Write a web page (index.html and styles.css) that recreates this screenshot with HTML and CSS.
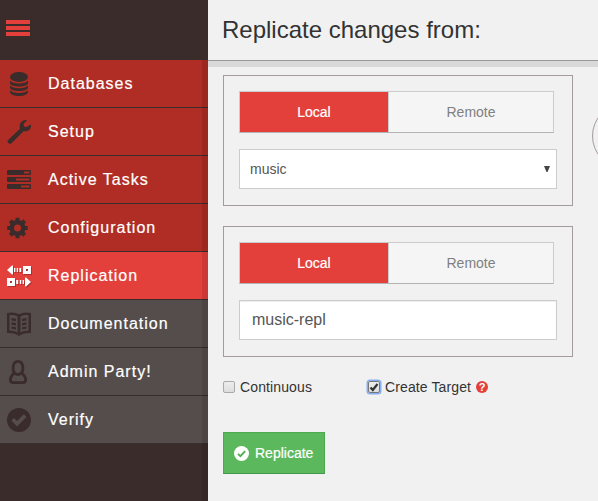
FILE: index.html
```html
<!DOCTYPE html>
<html lang="en">
<head>
<meta charset="utf-8">
<title>Replication</title>
<link rel="stylesheet" href="styles.css">
</head>
<body>
<div class="app">
  <aside class="sidebar">
    <div class="burger"><span></span><span></span><span></span></div>
    <nav class="nav">
      <a class="item">
        <svg class="icon" viewBox="0 0 24 24"><ellipse cx="12" cy="5" rx="9" ry="5"/><path d="M3 8.500c2 4 16 4 18 0v2.700c-1 4.400-17 4.400-18 0zM3 13.300c2 4 16 4 18 0v2.500c-1 4.400-17 4.400-18 0zM3 18c2 4 16 4 18 0v2c-1 5.300-17 5.300-18 0z"/></svg>
        <span>Databases</span></a>
      <a class="item">
        <svg class="icon" viewBox="0 0 24 24"><path d="M18.500 0h.8l.7.600-3.500 3.200.5 2.800 2.800.5L23.500 4.500l.5.700c.2 4-3 6.700-7.500 6L4.500 23.200c-2 1.600-5-.8-3.600-3L13 8.800C11.800 4.500 14 .5 18.500 0z"/></svg>
        <span>Setup</span></a>
      <a class="item">
        <svg class="icon" viewBox="0 0 24 24"><path fill-rule="evenodd" d="M1 2h22q1 0 1 1v3q0 1-1 1H1q-1 0-1-1V3q0-1 1-1zm16 1.500v2h5.500v-2zM1 9h22q1 0 1 1v3q0 1-1 1H1q-1 0-1-1v-3q0-1 1-1zm8 1.500v2h13.500v-2zM1 16h22q1 0 1 1v3q0 1-1 1H1q-1 0-1-1v-3q0-1 1-1zm13 1.500v2h8.500v-2z"/></svg>
        <span>Active Tasks</span></a>
      <a class="item">
        <svg class="icon" viewBox="0 0 24 24"><g transform="translate(10.500 12)"><circle r="5.750" fill="none" stroke="currentColor" stroke-width="4.500"/><g id="teeth"><rect x="-2" y="-10.200" width="4" height="4"/><rect x="-2" y="6.200" width="4" height="4"/><rect x="-10.200" y="-2" width="4" height="4"/><rect x="6.200" y="-2" width="4" height="4"/></g><use href="#teeth" transform="rotate(45)"/></g></svg>
        <span>Configuration</span></a>
      <a class="item active">
        <svg class="icon" viewBox="0 0 24 24"><path fill-rule="evenodd" d="M0 6l5-4.500h1v9H5zM7 4h1.400v4H7zM9.700 4h1.400v4H9.700zM12.400 4h1.800v4h-1.800zM16 2h8v8h-8zm3 3v2h2V5zM0 14h8v8H0zm3 3v2h2v-2zM9.200 16h2v4h-2zM12.800 16h1.400v4h-1.400zM15.600 16H17v4h-1.400zM24 18l-5 4.500h-1v-9h1z"/></svg>
        <span>Replication</span></a>
      <a class="item muted">
        <svg class="icon" viewBox="0 0 24 24"><path fill-rule="evenodd" d="M0 1q7-1.500 12 1.200Q17 -.5 24 1v20q-8-.5-12 3Q8 20.500 0 21zm2.500 2v15.600q5 0 8 1.600V4.200Q7 2.500 2.500 3zm19 0Q17 2.500 13.500 4.200v16q3-1.600 8-1.600z"/><path d="M4.500 6l4.500.8V9.300l-4.500-.8zM4.500 10.200l4.500.8v2.500l-4.500-.8zM4.500 14.400l4.500.8v2.300l-4.500-.8zM19.500 6l-4.500.8v2.500l4.500-.8zM19.500 10.200l-4.500.8v2.500l4.500-.8zM19.500 14.400l-4.500.8v2.300l4.500-.8z"/></svg>
        <span>Documentation</span></a>
      <a class="item muted">
        <svg class="icon" viewBox="0 0 24 24"><g fill="none" stroke="currentColor" stroke-width="2.800"><path d="M7.600 13.200C5.400 10.500 5 1.400 11 1.400s5.600 9.100 3.400 11.800q-3.400 2.600-6.800 0z"/><path d="M7.600 13.200C4.500 15 3.400 17 3.400 20q0 2.600 3 2.600h9.200q3 0 3-2.600c0-3-1.100-5-4.200-6.800"/></g></svg>
        <span>Admin Party!</span></a>
      <a class="item muted">
        <svg class="icon" viewBox="0 0 24 24"><path fill-rule="evenodd" d="M12 0a12 12 0 1 1 0 24a12 12 0 1 1 0-24zM4.500 12.500l5.500 6 9.500-9.500-2.700-2.700-6.800 6.700-3-3z"/></svg>
        <span>Verify</span></a>
    </nav>
  </aside>
  <main class="main">
    <header class="header"><h1>Replicate changes from:</h1></header>
    <div class="content">
      <form class="form">
        <section class="box">
          <div class="toggle"><span class="on">Local</span><span>Remote</span></div>
          <div class="field select"><span>music</span><svg width="6" height="6" viewBox="0 0 6 6"><path d="M0 0h6L3.500 6h-1z"/></svg></div>
        </section>
        <section class="box">
          <div class="toggle"><span class="on">Local</span><span>Remote</span></div>
          <div class="field text">music-repl</div>
        </section>
        <div class="options">
          <label class="option first"><i class="check"></i>Continuous</label>
          <label class="option"><i class="check checked"><svg viewBox="0 0 10 10"><path d="M1.500 5.500l2.300 2.500L8.500 2" fill="none" stroke="#333" stroke-width="2.200"/></svg></i>Create Target</label>
          <b class="help">?</b>
        </div>
        <div class="submit"><svg width="15" height="15" viewBox="0 0 15 15"><circle cx="7.500" cy="7.500" r="7.500" fill="#fff"/><path d="M4 7.800l2.400 2.400 4.800-5" fill="none" stroke="#4fae50" stroke-width="1.900"/></svg>Replicate</div>
      </form>
      <div class="ring"></div>
    </div>
  </main>
</div>
</body>
</html>
```
FILE: styles.css
```css
* { box-sizing: border-box; }
body {
  margin: 0;
  font: 14px/20px "Liberation Sans", Arial, sans-serif;
  color: #333;
  background: #f1f1f1;
  overflow: hidden;
}
.app { display: flex; width: 598px; height: 501px; }

.sidebar { position: relative; flex: 0 0 208px; background: #3a2c2b; }
.sidebar::after {
  content: "";
  position: absolute;
  inset: 60px 0 0 auto;
  width: 6px;
  background: rgba(0, 0, 0, .1);
}
.burger {
  height: 60px;
  padding: 20px 0 0 6px;
  display: flex;
  flex-direction: column;
  gap: 2px;
}
.burger span { width: 24px; height: 4px; background: #e33f3b; }
.item {
  display: flex;
  align-items: center;
  height: 48px;
  padding-left: 7px;
  gap: 17px;
  border-bottom: 1px solid #3a2c2b;
  background: #af2d24;
  color: #3a2c2b;
  font-size: 16px;
  letter-spacing: 1px;
}
.item span { color: #fff; -webkit-text-stroke: .2px #fff; }
.item.active { background: #e33f3b; color: #fff; }
.item.active .icon { filter: drop-shadow(1px 1px 0 rgba(0, 0, 0, .25)); }
.item.muted { background: #554d4c; }
.icon { width: 24px; height: 24px; fill: currentColor; }

.main { flex: 1; min-width: 0; overflow: hidden; }
.header {
  height: 67px;
  padding: 15px 14px 0;
  border-bottom: 6px solid #d9d9d9;
  box-shadow: inset 0 -1px #999;
}
h1 { margin: 0; font-size: 24px; line-height: 30px; font-weight: 400; }
.content { display: flex; padding: 8px 0 0 15px; }
.form { flex: 0 0 350px; }
.box {
  height: 131px;
  padding: 15px;
  margin-bottom: 20px;
  border: 1px solid #a39b9c;
}
.toggle {
  display: flex;
  width: 315px;
  height: 42px;
  border: 1px solid #ccc;
  border-bottom-color: #b3b3b3;
  background: #f5f5f5;
  color: #808080;
  line-height: 40px;
  text-align: center;
}
.toggle span { flex: 1; }
.toggle .on {
  flex: 0 0 149px;
  border-right: 1px solid #ccc;
  background: #e33f3b;
  color: #fff;
  -webkit-text-stroke: .2px #fff;
}
.field {
  display: flex;
  align-items: center;
  height: 40px;
  margin-top: 16px;
  border: 1px solid #ccc;
  background: #fff;
  color: #555;
}
.select { justify-content: space-between; padding: 0 6px 0 10px; }
.select svg { fill: #444; }
.text { padding-left: 12px; font-size: 16px; box-shadow: inset 0 1px 1px rgba(0, 0, 0, .075); }

.options { display: flex; align-items: center; height: 20px; letter-spacing: .12px; }
.option { display: flex; align-items: center; gap: 5px; }
.first { width: 145px; }
.check {
  width: 12px;
  height: 12px;
  border: 1px solid #aaa;
  border-radius: 2px;
  background: linear-gradient(#eee, #ddd);
}
.checked { border-color: #777; box-shadow: 0 0 0 1.500px #86aef0; }
.check svg { display: block; width: 10px; height: 10px; }
.help {
  width: 12px;
  height: 12px;
  margin-left: 5px;
  border-radius: 50%;
  background: #e33f3b;
  color: #fff;
  font-size: 11px;
  line-height: 12px;
  text-align: center;
}
.submit {
  display: flex;
  align-items: center;
  gap: 6px;
  width: 102px;
  height: 42px;
  margin-top: 35px;
  padding-left: 10px;
  border: 1px solid #4ea950;
  border-bottom-color: #45954a;
  background: #5cb85c;
  color: #fff;
  -webkit-text-stroke: .2px #fff;
}
.ring {
  flex: 0 0 66px;
  height: 66px;
  margin: 28px 0 0 19px;
  border: 1px solid #a39b9c;
  border-radius: 50%;
}
```
